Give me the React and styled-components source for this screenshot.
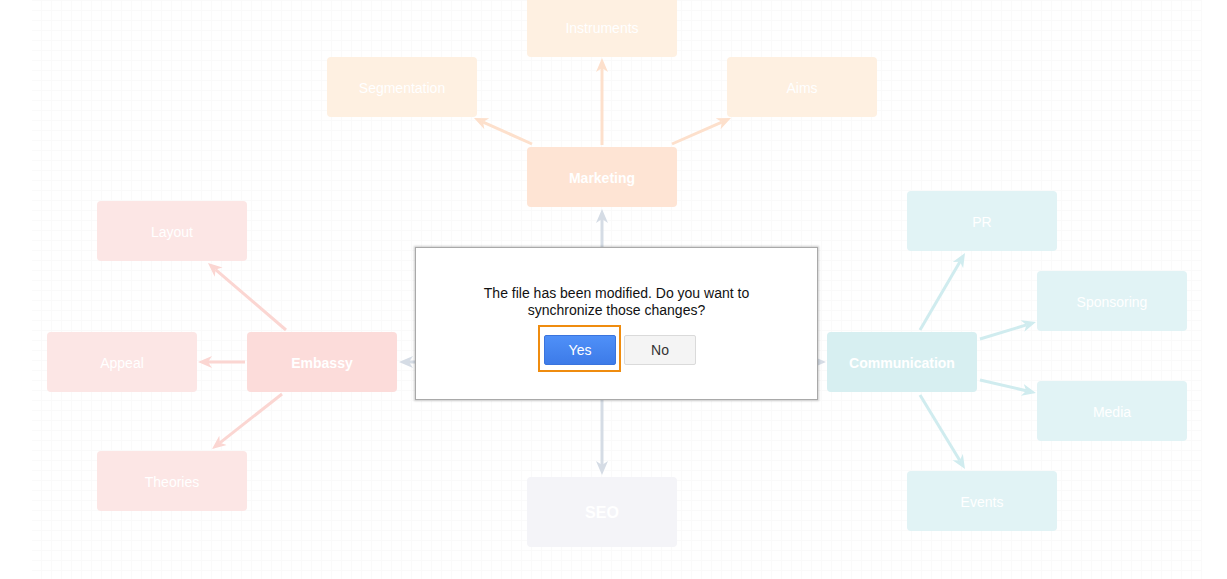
import React from 'react'
import styled, { createGlobalStyle } from 'styled-components'

const GlobalStyle = createGlobalStyle`
  html, body {
    margin: 0;
    padding: 0;
    background: #ffffff;
    font-family: "Liberation Sans", Arial, Helvetica, sans-serif;
  }
`

const palette = {
  marketing: { main: '#fee4d4', leaf: '#fef0e1', edge: '#fde0cc' },
  embassy: { main: '#fcdcda', leaf: '#fce6e5', edge: '#fbd6d2' },
  comm: { main: '#d7eff1', leaf: '#e1f3f5', edge: '#d0ecef' },
  seo: { main: '#f4f4f8', leaf: '#f4f4f8', edge: '#d5dce5' },
}

const nodes = [
  { label: 'Instruments', x: 527, y: -3, bg: palette.marketing.leaf },
  { label: 'Segmentation', x: 327, y: 57, bg: palette.marketing.leaf },
  { label: 'Aims', x: 727, y: 57, bg: palette.marketing.leaf },
  { label: 'Marketing', x: 527, y: 147, bg: palette.marketing.main, main: true },
  { label: 'Layout', x: 97, y: 201, bg: palette.embassy.leaf },
  { label: 'Appeal', x: 47, y: 332, bg: palette.embassy.leaf },
  { label: 'Embassy', x: 247, y: 332, bg: palette.embassy.main, main: true },
  { label: 'Theories', x: 97, y: 451, bg: palette.embassy.leaf },
  { label: 'SEO', x: 527, y: 477, h: 70, bg: palette.seo.main, main: true, big: true },
  { label: 'Communication', x: 827, y: 332, bg: palette.comm.main, main: true },
  { label: 'PR', x: 907, y: 191, bg: palette.comm.leaf },
  { label: 'Sponsoring', x: 1037, y: 271, bg: palette.comm.leaf },
  { label: 'Media', x: 1037, y: 381, bg: palette.comm.leaf },
  { label: 'Events', x: 907, y: 471, bg: palette.comm.leaf },
]

const edges = [
  { from: [602, 145], to: [602, 58], tone: 'marketing' },
  { from: [532, 144], to: [474, 118], tone: 'marketing' },
  { from: [672, 144], to: [731, 118], tone: 'marketing' },
  { from: [602, 340], to: [602, 209], tone: 'seo' },
  { from: [602, 380], to: [602, 475], tone: 'seo' },
  { from: [520, 362], to: [399, 362], tone: 'seo' },
  { from: [700, 362], to: [826, 362], tone: 'seo' },
  { from: [286, 330], to: [208, 263], tone: 'embassy' },
  { from: [245, 362], to: [198, 362], tone: 'embassy' },
  { from: [282, 394], to: [212, 449], tone: 'embassy' },
  { from: [920, 330], to: [965, 253], tone: 'comm' },
  { from: [980, 339], to: [1036, 322], tone: 'comm' },
  { from: [980, 380], to: [1036, 393], tone: 'comm' },
  { from: [920, 395], to: [965, 469], tone: 'comm' },
]

const Stage = styled.div`
  position: relative;
  width: 1227px;
  height: 579px;
  overflow: hidden;
  background: #ffffff;
`

const Grid = styled.div`
  position: absolute;
  top: 0;
  bottom: 0;
  left: 32px;
  width: 1170px;
  background-color: #ffffff;
  background-image:
    linear-gradient(to right, #fafafa 1px, transparent 1px),
    linear-gradient(to bottom, #fafafa 1px, transparent 1px);
  background-size: 10px 10px;
  background-position: -1px 0;
`

const Node = styled.div`
  position: absolute;
  width: 150px;
  height: ${p => p.$h || 60}px;
  box-sizing: border-box;
  padding-top: 2px;
  border-radius: 4px;
  background: ${p => p.$bg};
  color: #ffffff;
  display: flex;
  align-items: center;
  justify-content: center;
  font-size: ${p => (p.$big ? 16 : 14)}px;
  font-weight: ${p => (p.$main ? 700 : 400)};
`

const Edges = styled.svg`
  position: absolute;
  inset: 0;
  width: 1227px;
  height: 579px;
`

const Dialog = styled.div`
  position: absolute;
  left: 415px;
  top: 247px;
  width: 403px;
  height: 153px;
  background: #ffffff;
  border: 1px solid #a9a9a9;
  box-shadow: 0 0 2px 1px rgba(0, 0, 0, 0.2);
  display: flex;
  flex-direction: column;
  align-items: center;
  padding-top: 37px;
  box-sizing: border-box;
`

const Message = styled.p`
  margin: 0;
  font-size: 14px;
  line-height: 17px;
  color: #111111;
  text-align: center;
`

const Buttons = styled.div`
  display: flex;
  align-items: flex-start;
  gap: 3px;
  margin-top: 6px;
  margin-left: 1px;
`

const FocusRing = styled.div`
  border: 2px solid #ef8c0f;
  padding: 8px 3px 5px 4px;
`

const Button = styled.button`
  width: 72px;
  height: 30px;
  box-sizing: border-box;
  border-radius: 2px;
  font-family: inherit;
  font-size: 14px;
  padding: 0;
  margin-top: ${p => (p.$primary ? 0 : 10)}px;
  color: ${p => (p.$primary ? '#ffffff' : '#333333')};
  border: 1px solid ${p => (p.$primary ? '#3a74dd' : '#dadada')};
  background: ${p =>
    p.$primary ? 'linear-gradient(#4f90f8, #3d7be8)' : '#f4f4f4'};
`

function shorten(from, to, by) {
  const dx = to[0] - from[0]
  const dy = to[1] - from[1]
  const len = Math.hypot(dx, dy)
  return [to[0] - (dx / len) * by, to[1] - (dy / len) * by]
}

export default function App() {
  return (
    <Stage>
      <GlobalStyle />
      <Grid />
      <Edges viewBox="0 0 1227 579">
        <defs>
          {Object.entries(palette).map(([key, c]) => (
            <marker
              key={key}
              id={`head-${key}`}
              markerUnits="userSpaceOnUse"
              markerWidth="14"
              markerHeight="14"
              refX="4"
              refY="7"
              orient="auto"
            >
              <path d="M0,1 L14,7 L0,13 L4,7 Z" fill={c.edge} />
            </marker>
          ))}
        </defs>
        {edges.map((e, i) => {
          const end = shorten(e.from, e.to, 10)
          return (
            <line
              key={i}
              x1={e.from[0]}
              y1={e.from[1]}
              x2={end[0]}
              y2={end[1]}
              stroke={palette[e.tone].edge}
              strokeWidth="3"
              markerEnd={`url(#head-${e.tone})`}
            />
          )
        })}
      </Edges>
      {nodes.map(n => (
        <Node
          key={n.label}
          style={{ left: n.x, top: n.y }}
          $bg={n.bg}
          $h={n.h}
          $main={n.main}
          $big={n.big}
        >
          {n.label}
        </Node>
      ))}
      <Dialog>
        <Message>
          The file has been modified. Do you want to
          <br />
          synchronize those changes?
        </Message>
        <Buttons>
          <FocusRing>
            <Button $primary>Yes</Button>
          </FocusRing>
          <Button>No</Button>
        </Buttons>
      </Dialog>
    </Stage>
  )
}
